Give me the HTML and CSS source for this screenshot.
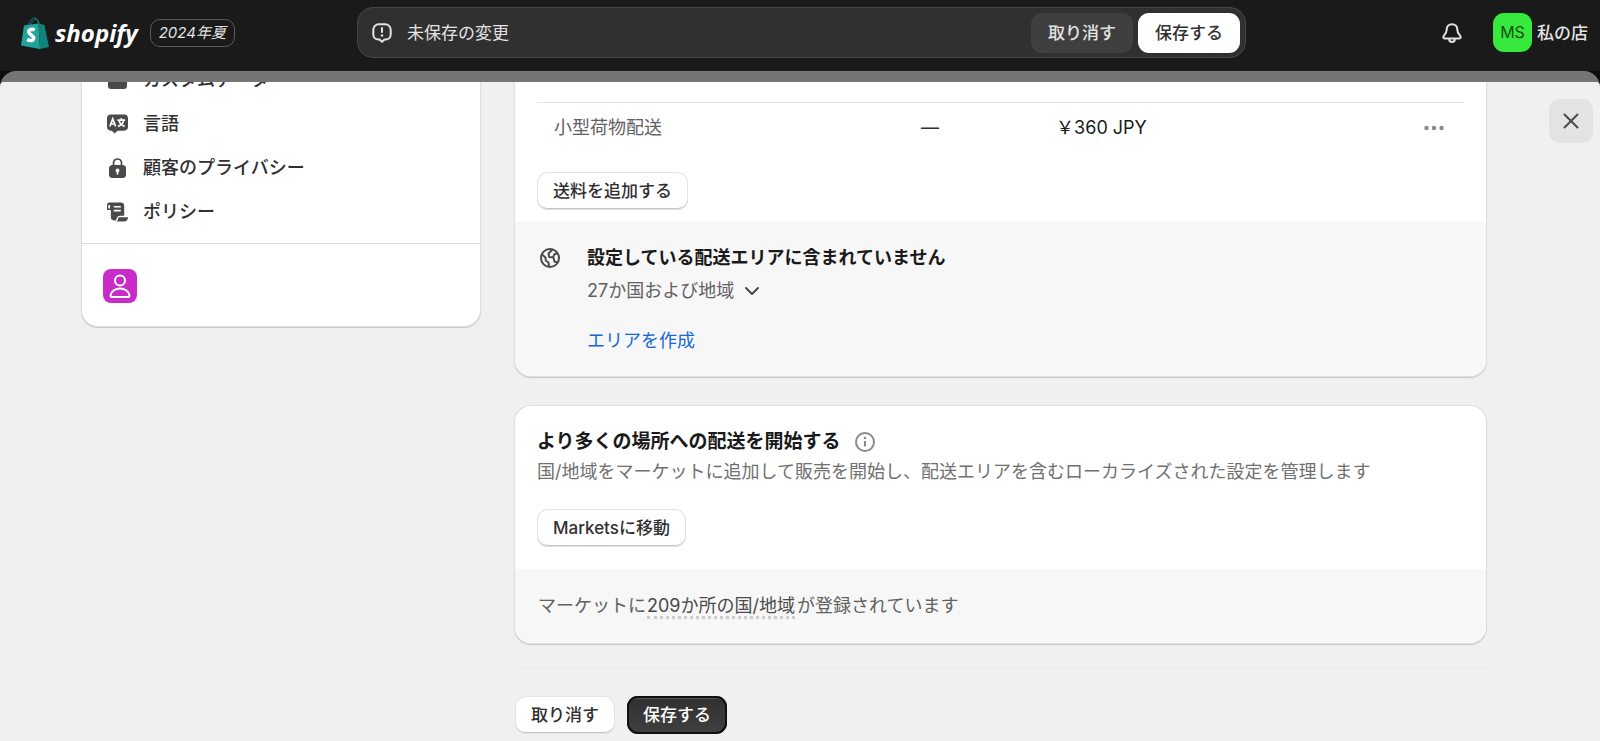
FILE: index.html
```html
<!DOCTYPE html>
<html lang="ja">
<head>
<meta charset="utf-8">
<title>配送と配達</title>
<link rel="stylesheet" href="styles.css">
</head>
<body>
<header class="topbar">
  <div class="brand">
    <svg class="brand-bag" viewBox="0 0 28 32" aria-hidden="true">
      <path d="M7.500 9C8.500 4 11 1 13.500 1s3.500 3 4 6M10 8C11 4 13 2 15.500 2.500c2 .5 2.500 3 2.500 5" fill="none" stroke="#12857f" stroke-width="1"/>
      <path d="M3 8.500 17.500 6.500 19 32 0 28.500z" fill="#1fa39b"/>
      <path d="M17.500 6.500 23.500 8 28 30 19 32z" fill="#12827c"/>
      <path d="M13.800 13c-3-1.600-6-.5-6 2 0 3 4.800 3 4.800 6 0 2.700-3.200 3.300-6.400 1.400" fill="none" stroke="#fff" stroke-width="3.600"/>
    </svg>
    <span class="brand-name">shopify</span>
    <span class="edition">2024年夏</span>
  </div>
  <div class="savebar">
    <svg class="icon" viewBox="0 0 20 20" aria-hidden="true"><path d="M7 1.300h6A5.500 5.500 0 0 1 18.700 7v4.500a5 5 0 0 1-5 5h-1.200L10 18.800l-2.500-2.300H6.300a5 5 0 0 1-5-5V7A5.500 5.500 0 0 1 7 1.300z" fill="none" stroke="#e3e3e3" stroke-width="2" stroke-linejoin="round"/><path d="M10 5v4" stroke="#e3e3e3" stroke-width="2" stroke-linecap="round"/><circle cx="10" cy="12.500" r="1.200" fill="#e3e3e3"/></svg>
    <span class="savebar-text">未保存の変更</span>
    <button class="btn btn-ghost" type="button">取り消す</button>
    <button class="btn btn-light" type="button">保存する</button>
  </div>
  <div class="account">
    <button class="bell" type="button" aria-label="通知"><svg class="icon" viewBox="0 0 20 20" aria-hidden="true"><path d="M10 1.200c-3.300 0-5.300 2.400-5.300 5.300 0 3.300-.7 4.300-2.700 6.100-1.300 1.300-.7 2.900 1.200 2.900h13.600c1.900 0 2.500-1.600 1.200-2.900-2-1.800-2.700-2.800-2.700-6.100 0-2.900-2-5.300-5.300-5.300zM7.200 15.500v.7a2.800 2.800 0 0 0 5.600 0v-.7" fill="none" stroke="#e3e3e3" stroke-width="2" stroke-linejoin="round"/></svg></button>
    <button class="store" type="button"><span class="avatar">MS</span>私の店</button>
  </div>
</header>
<div class="backdrop">
<div class="sheet">
  <nav class="sidebar">
    <ul class="menu">
      <li><a href="#"><svg class="icon" viewBox="0 0 20 20" aria-hidden="true"><rect x="0.500" y="1" width="19" height="18" rx="3" fill="#4a4a4a"/></svg>カスタムデータ</a></li>
      <li><a href="#"><svg class="icon" viewBox="0 0 22 20" aria-hidden="true"><path d="M4 0h14a4 4 0 0 1 4 4v9a4 4 0 0 1-4 4h-7l-3 3-3-3H4a4 4 0 0 1-4-4V4a4 4 0 0 1 4-4z" fill="#4a4a4a"/><path d="M3 12.500 6 4.500l3 8M4 10h4.200M11 6h8M15 3.800V6M12.500 6c.5 2.500 3 5.500 6 6.500M17.500 6c-.5 2.500-3 5.500-6 6.500" fill="none" stroke="#fff" stroke-width="1.700"/></svg>言語</a></li>
      <li><a href="#"><svg class="icon" viewBox="0 0 20 20" aria-hidden="true"><path d="M6 9V5a4 4 0 0 1 8 0v4" fill="none" stroke="#4a4a4a" stroke-width="1.700"/><rect x="1.500" y="7" width="17" height="13" rx="3.500" fill="#4a4a4a"/><circle cx="10" cy="12.500" r="1.900" fill="#fff"/><path d="M9.200 13h1.600v3.500H9.200z" fill="#fff"/></svg>顧客のプライバシー</a></li>
      <li><a href="#"><svg class="icon" viewBox="0 0 22 20" aria-hidden="true"><path d="M0 2.500A2.500 2.500 0 0 1 2.500 0h12A3.500 3.500 0 0 1 18 3.500V14h-4c-3 0-4 2-4.500 5H8a4 4 0 0 1-4-4V8H0z" fill="#4a4a4a"/><path d="M12 15.500h10c0 2.500-1.500 4.500-4 4.500H9c2 0 2.500-1.500 3-4.500z" fill="#4a4a4a"/><path d="M2.300 6.300V2.700M7 4.500h7.500M7 8.500h7.500" stroke="#fff" stroke-width="1.800"/></svg>ポリシー</a></li>
    </ul>
    <div class="user"><button class="user-tile" type="button" aria-label="ユーザー"><svg viewBox="0 0 34 34" aria-hidden="true"><circle cx="17" cy="11.500" r="5" fill="none" stroke="#fff" stroke-width="2"/><path d="M7.500 26.500c.5-4 4.500-7 9.500-7s9 3 9.500 7c0 1-.7 1.500-1.500 1.500H9c-.8 0-1.500-.5-1.500-1.500z" fill="none" stroke="#fff" stroke-width="2"/></svg></button></div>
  </nav>
  <main class="content">
    <section class="card card-rates">
      <div class="card-body">
        <table class="rates">
          <tr><td class="rate-name">小型荷物配送</td><td class="rate-condition">—</td><td class="rate-price">￥360 JPY</td><td class="rate-menu"><button class="more" type="button" aria-label="その他"><svg class="icon" viewBox="0 0 20 20" aria-hidden="true"><g fill="#8a8a8a"><circle cx="2.500" cy="10" r="2.200"/><circle cx="10" cy="10" r="2.200"/><circle cx="17.500" cy="10" r="2.200"/></g></svg></button></td></tr>
        </table>
        <button class="btn btn-outline" type="button">送料を追加する</button>
      </div>
      <div class="card-foot zone">
        <svg class="icon" viewBox="0 0 20 20" aria-hidden="true"><g fill="none" stroke="#4a4a4a" stroke-width="2" stroke-linejoin="round"><circle cx="10" cy="10" r="9"/><path d="M2 6.500 5.500 9.500 5.800 12.500 8.500 14.500 9 18.700M12.500 1.500 8.500 5.500 9.200 9 13.500 9.500 14.500 13.800 18 14M13 9.500l1.500-3.300 2.500-1"/></g></svg>
        <div class="zone-text">
          <h3>設定している配送エリアに含まれていません</h3>
          <button class="disclosure" type="button">27か国および地域<svg viewBox="0 0 14 10" aria-hidden="true"><path d="M1 2l6 6 6-6" fill="none" stroke="#4a4a4a" stroke-width="2" stroke-linecap="round" stroke-linejoin="round"/></svg></button>
          <a class="link" href="#">エリアを作成</a>
        </div>
      </div>
    </section>
    <section class="card">
      <div class="card-body card-markets">
        <h2>より多くの場所への配送を開始する<svg class="icon" viewBox="0 0 20 20" aria-hidden="true"><circle cx="10" cy="10" r="9" fill="none" stroke="#8a8a8a" stroke-width="2"/><path d="M10 9v5.500" stroke="#8a8a8a" stroke-width="2"/><circle cx="10" cy="6" r="1.300" fill="#8a8a8a"/></svg></h2>
        <p>国/地域をマーケットに追加して販売を開始し、配送エリアを含むローカライズされた設定を管理します</p>
        <button class="btn btn-outline" type="button">Marketsに移動</button>
      </div>
      <div class="card-foot"><p>マーケットに<span class="dotted">209か所の国/地域</span>が登録されています</p></div>
    </section>
    <div class="page-actions">
      <button class="btn btn-outline" type="button">取り消す</button>
      <button class="btn btn-dark" type="button">保存する</button>
    </div>
  </main>
  <button class="close" type="button" aria-label="閉じる"><svg viewBox="0 0 16 16" aria-hidden="true"><path d="M1.500 1.500l13 13M14.500 1.500l-13 13" stroke="#4a4a4a" stroke-width="2" stroke-linecap="round"/></svg></button>
</div>
</div>
</body>
</html>
```
FILE: styles.css
```css
* { box-sizing: border-box; }
body {
  margin: 0;
  height: 100vh;
  overflow: hidden;
  display: flex;
  flex-direction: column;
  background: #0c0c0c;
  color: #303030;
  font-family: Inter, "Noto Sans CJK JP", sans-serif;
  font-size: 18px;
  line-height: 28px;
}
button { font: inherit; color: inherit; border: 0; padding: 0; background: none; white-space: nowrap; }
h2, h3, p, ul { margin: 0; padding: 0; }
.icon { width: 20px; height: 20px; flex: none; display: block; }

.topbar {
  flex: none;
  height: 71px;
  padding: 7px 12px 13px 15px;
  display: grid;
  grid-template-columns: 1fr minmax(0, 889px) 1fr;
  background: #1a1a1a;
  color: #e3e3e3;
  font-size: 17px;
}
.brand { display: flex; align-items: center; padding-left: 6px; }
.brand-bag { width: 28px; height: 32px; }
.brand-name { margin: 0 12px 0 6px; color: #fff; font: italic 700 24px/32px "Open Sans", sans-serif; }
.edition { padding: 0 8px; border: 1px solid #5a5a5a; border-radius: 10px; font-size: 15px; line-height: 26px; font-style: italic; white-space: nowrap; }
.savebar { display: flex; align-items: center; gap: 5px; padding: 0 5px 0 14px; border: 1px solid #454746; border-radius: 16px; background: #303030; }
.savebar-text { flex: 1; padding-left: 10px; }
.account { display: flex; align-items: center; justify-content: flex-end; gap: 31px; }
.store { display: flex; align-items: center; gap: 5px; font-weight: 500; }
.avatar { width: 39px; height: 39px; border-radius: 11px; background: #36e93c; color: #105014; font-size: 16px; font-weight: 400; line-height: 39px; }

.btn { height: 38px; padding: 0 16px; border-radius: 11px; font-size: 17px; line-height: 24px; font-weight: 500; }
.btn-ghost { height: 40px; padding: 0 17px; background: #3f3f3f; }
.btn-light { height: 40px; padding: 0 17px; background: #fff; color: #303030; }
.btn-outline { background: #fff; color: #303030; box-shadow: inset 0 0 0 1px #e3e3e3, inset 0 -2px 0 #c4c4c4; }
.btn-dark { background: linear-gradient(#303030, #404040); color: #fff; box-shadow: inset 0 0 0 2px #111, inset 0 3px 0 #555; }

.backdrop { flex: 1; min-height: 0; display: flex; overflow: hidden; padding-top: 11px; border-radius: 16px 16px 0 0; background: #757575; }
.sheet {
  flex: 1;
  display: flex;
  align-items: flex-start;
  overflow: hidden;
  padding: 0 7px 0 82px;
  border-radius: 4px 4px 0 0;
  background: #f0f0f0;
}
.sidebar { flex: 0 1 398px; background: #fff; border-radius: 0 0 16px 16px; box-shadow: 0 0 0 1px #e0e0e0, 0 1px 1px 1px #c8c8c8; }
.menu { list-style: none; margin-top: -24px; padding-bottom: 9px; }
.menu a { display: flex; align-items: center; gap: 15px; height: 44px; padding-left: 25px; color: #303030; font-weight: 500; text-decoration: none; }
.menu .icon { width: 21px; }
.user { padding: 25px 21px 23px; border-top: 1px solid #dcdcdc; }
.user-tile { display: block; width: 34px; height: 34px; border-radius: 8px; background: #c92bc9; }
.user-tile svg { display: block; }

.content { flex: 1; margin: 0 63px 0 35px; }
.card { overflow: hidden; border-radius: 16px; background: #fff; box-shadow: 0 0 0 1px #e0e0e0, 0 1px 1px 1px #c8c8c8; }
.card-rates { border-radius: 0 0 16px 16px; }
.card-body { padding: 20px 22px 12px; }
.card-foot { padding: 23px; background: #f7f7f7; color: #616161; }
.rates { width: 100%; border-collapse: collapse; border-top: 1px solid #e3e3e3; margin-bottom: 18px; }
.rates td { padding: 11px 0 12px; height: 51px; }
.rates .rate-name { width: 41%; padding-left: 17px; color: #616161; }
.rates .rate-condition { width: 15%; padding-left: 4px; }
.rates .rate-price { color: #1a1a1a; }
.rates .rate-menu { padding-right: 20px; }
.more { display: block; margin-left: auto; }
.zone { display: flex; gap: 27px; padding: 22px 25px 21px; }
.zone > .icon { margin-top: 4px; }
.zone-text { display: grid; justify-items: start; }
h3 { font-size: 18px; font-weight: 600; color: #1a1a1a; }
.disclosure { display: flex; align-items: center; gap: 11px; margin: 5px 0 22px; }
.disclosure svg { width: 14px; height: 10px; }
.link { color: #1767d9; text-decoration: none; }
.card + .card { margin-top: 30px; }
.card-markets { padding: 21px 22px 22px; }
.card-markets p { margin-bottom: 23px; color: #707070; }
h2 { display: flex; align-items: center; gap: 14px; margin-bottom: 1px; font-size: 19px; line-height: 30px; font-weight: 600; color: #1a1a1a; }
.dotted { margin: 0 2px 0 1px; color: #4a4a4a; border-bottom: 3px dotted #ccc; }
.page-actions { display: flex; gap: 12px; margin-top: 24px; padding-top: 28px; border-top: 1px solid #e8e8e8; }
.close { flex: none; display: grid; place-items: center; width: 44px; height: 44px; margin-top: 17px; border-radius: 11px; background: #e3e3e3; }
.close svg { width: 16px; height: 16px; }
```
